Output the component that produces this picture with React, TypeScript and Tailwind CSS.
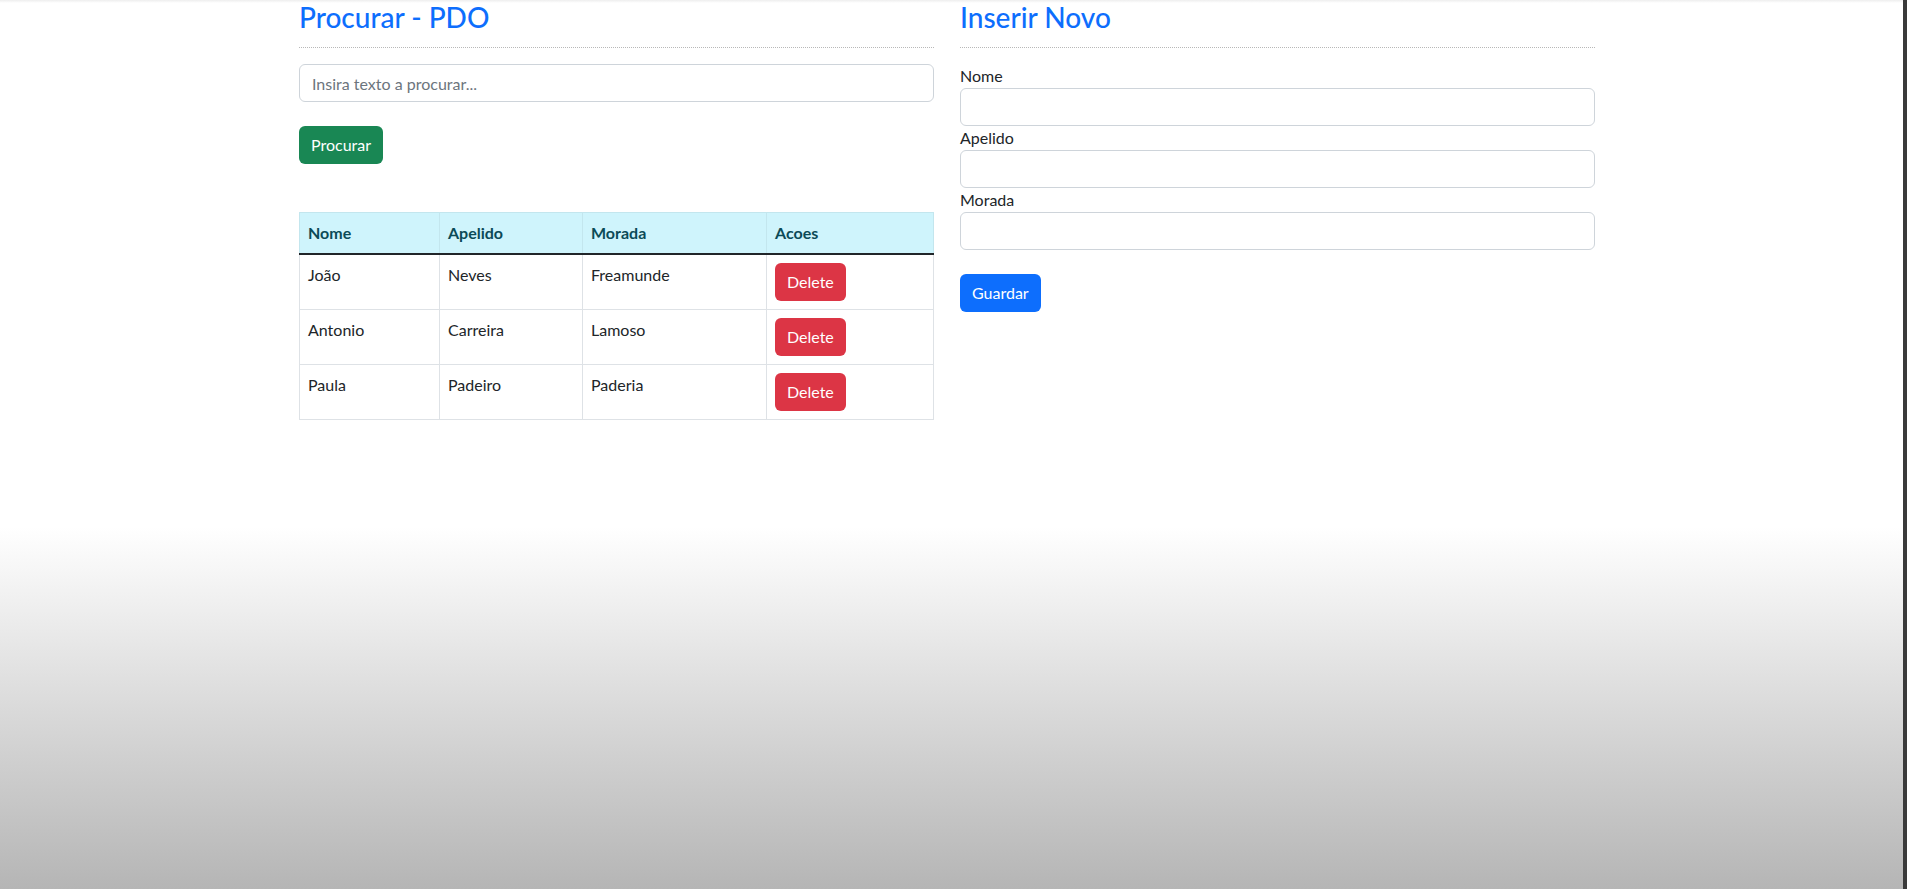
import React from "react";

const rows = [
  { nome: "João", apelido: "Neves", morada: "Freamunde" },
  { nome: "Antonio", apelido: "Carreira", morada: "Lamoso" },
  { nome: "Paula", apelido: "Padeiro", morada: "Paderia" },
];

function Heading({ children }: { children: React.ReactNode }) {
  return (
    <>
      <h3 className="text-[28px] leading-[34px] font-medium text-[#0d6efd]">{children}</h3>
      <hr className="mt-[13px] border-0 border-t border-dotted border-[#b8b8b8]" />
    </>
  );
}

export default function App() {
  return (
    <div className="h-[889px] w-full overflow-hidden border-r-4 border-[#3a3a3a] bg-[linear-gradient(180deg,#eeeeee_0px,#ffffff_3px,#ffffff_527px,#b5b5b5_889px)] text-[16px] leading-6 text-[#212529] font-['Lato','Open_Sans',sans-serif]">
      <div className="flex gap-[26px] pl-[299px]">
        {/* Left column */}
        <div className="flex w-[635px] flex-col">
          <Heading>Procurar - PDO</Heading>
          <input
            type="text"
            placeholder="Insira texto a procurar..."
            className="mt-4 h-[38px] w-full rounded-[6px] border border-[#ced4da] bg-white px-3 text-[16px] outline-none placeholder:text-[#6c757d]"
          />
          <div className="mt-6">
            <button className="h-[38px] rounded-[6px] bg-[#198754] px-3 text-[16px] leading-6 text-white">
              Procurar
            </button>
          </div>
          <table className="mt-12 w-full border-collapse border border-[#dee2e6] bg-white">
            <thead>
              <tr className="bg-[#cff4fc] text-[#0b4a57]">
                <th className="w-[140px] border-x border-t border-[#c3e6ee] border-b-2 border-b-[#212529] p-2 text-left font-bold leading-6">Nome</th>
                <th className="w-[143px] border-x border-t border-[#c3e6ee] border-b-2 border-b-[#212529] p-2 text-left font-bold leading-6">Apelido</th>
                <th className="w-[184px] border-x border-t border-[#c3e6ee] border-b-2 border-b-[#212529] p-2 text-left font-bold leading-6">Morada</th>
                <th className="border-x border-t border-[#c3e6ee] border-b-2 border-b-[#212529] p-2 text-left font-bold leading-6">Acoes</th>
              </tr>
            </thead>
            <tbody>
              {rows.map((r) => (
                <tr key={r.nome}>
                  <td className="border border-[#dee2e6] p-2 align-top leading-6">{r.nome}</td>
                  <td className="border border-[#dee2e6] p-2 align-top leading-6">{r.apelido}</td>
                  <td className="border border-[#dee2e6] p-2 align-top leading-6">{r.morada}</td>
                  <td className="border border-[#dee2e6] p-2 align-top leading-6">
                    <button className="h-[38px] rounded-[6px] bg-[#dc3545] px-3 text-[16px] leading-6 text-white">
                      Delete
                    </button>
                  </td>
                </tr>
              ))}
            </tbody>
          </table>
        </div>

        {/* Right column */}
        <div className="flex w-[635px] flex-col">
          <Heading>Inserir Novo</Heading>
          <label className="mt-4 leading-6">Nome</label>
          <input type="text" className="h-[38px] w-full rounded-[6px] border border-[#ced4da] bg-white px-3 outline-none" />
          <label className="leading-6">Apelido</label>
          <input type="text" className="h-[38px] w-full rounded-[6px] border border-[#ced4da] bg-white px-3 outline-none" />
          <label className="leading-6">Morada</label>
          <input type="text" className="h-[38px] w-full rounded-[6px] border border-[#ced4da] bg-white px-3 outline-none" />
          <div className="mt-6">
            <button className="h-[38px] rounded-[6px] bg-[#0d6efd] px-3 text-[16px] leading-6 text-white">
              Guardar
            </button>
          </div>
        </div>
      </div>
    </div>
  );
}
